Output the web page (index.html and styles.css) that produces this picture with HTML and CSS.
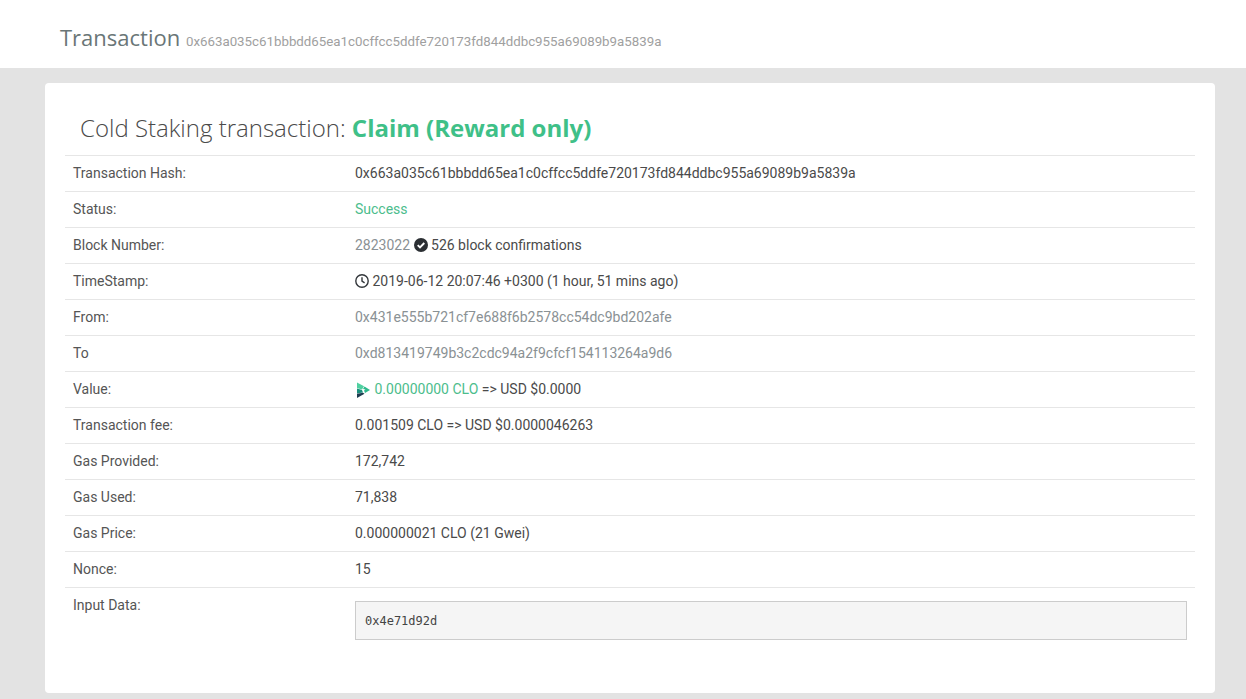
FILE: index.html
```html
<!DOCTYPE html>
<html lang="en">
<head>
    <meta charset="UTF-8">
    <meta name="viewport" content="width=device-width, initial-scale=1.0">
    <title>Transaction</title>
    <link rel="stylesheet" href="styles.css">
</head>
<body>
    <header class="page-head">
        <h1>Transaction <small>0x663a035c61bbbdd65ea1c0cffcc5ddfe720173fd844ddbc955a69089b9a5839a</small></h1>
    </header>
    <main class="card">
        <h2 class="card-title">Cold Staking transaction: <strong>Claim (Reward only)</strong></h2>
        <div class="row">
            <div class="label">Transaction Hash:</div>
            <div class="value">0x663a035c61bbbdd65ea1c0cffcc5ddfe720173fd844ddbc955a69089b9a5839a</div>
        </div>
        <div class="row">
            <div class="label">Status:</div>
            <div class="value green">Success</div>
        </div>
        <div class="row">
            <div class="label">Block Number:</div>
            <div class="value">
                <a href="#">2823022</a>
                <svg class="icon" viewBox="0 0 14 14"><circle cx="7" cy="7" r="7" fill="#2b2f33"/><path d="M3.7 7.2l2.3 2.3 4.3-4.5" fill="none" stroke="#fff" stroke-width="1.9"/></svg>
                526 block confirmations
            </div>
        </div>
        <div class="row">
            <div class="label">TimeStamp:</div>
            <div class="value">
                <svg class="icon clock" viewBox="0 0 14 14"><circle cx="7" cy="7" r="6.2" fill="none" stroke="#33373b" stroke-width="1.4"/><path d="M7 3.2v4l2.600 1.700" fill="none" stroke="#33373b" stroke-width="1.4"/></svg>
                2019-06-12 20:07:46 +0300 (1 hour, 51 mins ago)
            </div>
        </div>
        <div class="row">
            <div class="label">From:</div>
            <div class="value"><a href="#">0x431e555b721cf7e688f6b2578cc54dc9bd202afe</a></div>
        </div>
        <div class="row">
            <div class="label">To</div>
            <div class="value"><a href="#">0xd813419749b3c2cdc94a2f9cfcf154113264a9d6</a></div>
        </div>
        <div class="row">
            <div class="label">Value:</div>
            <div class="value">
                <svg class="icon logo" viewBox="0 0 16 16">
                    <path d="M2 .5L9 4.200 7 7.500 2 6z" fill="#4fd0a0"/>
                    <path d="M9.500 4.500L15 8l-5 3-1-2.500L10.500 7.500 8 7z" fill="#2fb98c"/>
                    <path d="M2 6.500l5 1.500 1 2.500L2 11.500z" fill="#1c8f7d"/>
                    <path d="M2 11.800l6-1 1.500 1L2 16z" fill="#1d3b4f"/>
                </svg>
                <span class="green">0.00000000 CLO</span> =&gt; USD $0.0000
            </div>
        </div>
        <div class="row">
            <div class="label">Transaction fee:</div>
            <div class="value">0.001509 CLO =&gt; USD $0.0000046263</div>
        </div>
        <div class="row">
            <div class="label">Gas Provided:</div>
            <div class="value">172,742</div>
        </div>
        <div class="row">
            <div class="label">Gas Used:</div>
            <div class="value">71,838</div>
        </div>
        <div class="row">
            <div class="label">Gas Price:</div>
            <div class="value">0.000000021 CLO (21 Gwei)</div>
        </div>
        <div class="row">
            <div class="label">Nonce:</div>
            <div class="value">15</div>
        </div>
        <div class="row input-row">
            <div class="label">Input Data:</div>
            <div class="value"><pre>0x4e71d92d</pre></div>
        </div>
    </main>
</body>
</html>
```

FILE: styles.css
```css
html, body {
    height: 100%;
}
body {
    margin: 0;
    background: #e3e3e3;
    color: #4a4a4a;
    font-family: Roboto, Arial, sans-serif;
    font-size: 14px;
    line-height: 20px;
    overflow: hidden;
}
.page-head {
    background: #fff;
    height: 68px;
    padding-left: 60px;
    box-sizing: border-box;
}
.page-head h1 {
    margin: 0;
    padding-top: 21px;
    font-family: "Open Sans", Arial, sans-serif;
    font-size: 22px;
    font-weight: 400;
    line-height: 32px;
    color: #6a7677;
}
.page-head small {
    font-family: "Roboto", Arial, sans-serif;
    font-size: 13.3px;
    font-weight: 400;
    color: #a0a0a0;
}
.card {
    margin: 15px 31px 0 45px;
    height: 610px;
    box-sizing: border-box;
    padding: 0 20px;
    background: #fff;
    border-radius: 4px;
}
.card-title {
    margin: 0;
    height: 72px;
    padding: 27px 0 0 15px;
    box-sizing: border-box;
    font-family: "Open Sans", Arial, sans-serif;
    font-size: 24px;
    font-weight: 300;
    line-height: 36px;
    color: #4a4a4a;
}
.card-title strong {
    font-weight: 700;
    color: #3fc088;
}
.row {
    display: flex;
    height: 36px;
    box-sizing: border-box;
    border-top: 1px solid #e6e6e6;
    padding: 7px 8px 0;
}
.label {
    width: 282px;
    flex: none;
    color: #555;
}
.value {
    flex: 1;
    color: #4a4a4a;
}
.value a {
    color: #8a9194;
    text-decoration: none;
}
.value.green, .green {
    color: #4cbd8c;
}
.icon {
    width: 14px;
    height: 14px;
    vertical-align: -2px;
}
.logo {
    width: 16px;
    height: 16px;
    vertical-align: -4px;
}
.input-row {
    height: auto;
}
pre {
    margin: 6px 0 0;
    height: 39px;
    box-sizing: border-box;
    padding: 10px 9px;
    background: #f5f5f5;
    border: 1px solid #ccc;
    font-family: "DejaVu Sans Mono", monospace;
    font-size: 12px;
    line-height: 18px;
    color: #444;
}
```
